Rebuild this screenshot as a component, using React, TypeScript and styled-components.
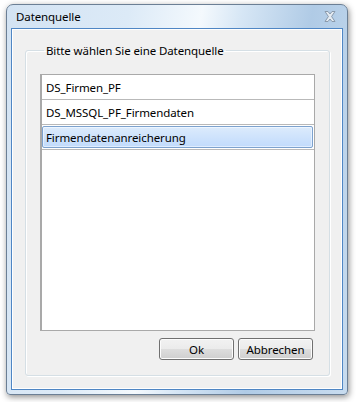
import React from "react";
import styled, { createGlobalStyle } from "styled-components";

const GlobalStyle = createGlobalStyle`
  html, body {
    margin: 0;
    padding: 0;
    background: #ffffff;
  }
  body {
    font-family: "Noto Sans", "Liberation Sans", sans-serif;
    font-size: 11.5px;
    color: #000;
  }
`;

const Page = styled.div`
  width: 358px;
  height: 402px;
  padding: 4px 0 0 6px;
  box-sizing: border-box;
`;

const Window = styled.div`
  width: 342px;
  height: 391px;
  box-sizing: border-box;
  display: flex;
  flex-direction: column;
  border: 1px solid #6b7f95;
  border-radius: 7px 7px 4px 4px;
  box-shadow: 1px 2px 6px rgba(0, 0, 0, 0.45);
  background: linear-gradient(
    100deg,
    #d3e3f3 0%,
    #dceaf7 30%,
    #f4f9fd 48%,
    #d6e6f5 58%,
    #b0cbe6 75%,
    #c8dcef 100%
  );
  padding: 0 4px 4px 4px;
`;

const TitleBar = styled.div`
  height: 23px;
  display: flex;
  align-items: center;
  justify-content: space-between;
  padding: 0 3px 0 5px;
`;

const Title = styled.span`
  font-size: 11.5px;
  color: #000;
  letter-spacing: -0.1px;
`;

const CloseIcon = styled.svg`
  width: 14px;
  height: 13px;
  margin-right: 3px;
`;

const Client = styled.div`
  flex: 1;
  border: 1px solid #4f86c4;
  box-shadow: inset 0 0 0 1px #ffffff;
  background: #f0f0f0;
  padding: 14px 12px 13px 13px;
  display: flex;
`;

const Group = styled.fieldset`
  flex: 1;
  margin: 0;
  padding: 16px 14px 15px 14px;
  border: 1px solid #d5dfe5;
  border-radius: 3px;
  box-shadow: inset 1px 1px 0 #ffffff, 1px 1px 0 #ffffff;
  display: flex;
  flex-direction: column;
  min-width: 0;
`;

const Legend = styled.legend`
  padding: 0 2px;
  margin-left: 4px;
  font-size: 11.5px;
  letter-spacing: -0.1px;
`;

const List = styled.div`
  flex: 1;
  background: #ffffff;
  border: 1px solid #a9a9a9;
  border-left: 2px solid #a9a9a9;
  display: flex;
  flex-direction: column;
`;

const Row = styled.div`
  height: 24px;
  border-bottom: 1px solid #b9b9b9;
  box-sizing: content-box;
  display: flex;
`;

const RowInner = styled.div<{ $selected?: boolean }>`
  flex: 1;
  display: flex;
  align-items: center;
  padding-left: ${(p) => (p.$selected ? "3px" : "4px")};
  letter-spacing: -0.1px;
  ${(p) =>
    p.$selected
      ? `
    margin: 1px 1px 1px 0;
    border: 1px solid #7da2ce;
    border-radius: 2px;
    background: linear-gradient(#dcebfc, #c1dbfc);
    box-shadow: inset 0 0 0 1px rgba(255,255,255,0.5);
  `
      : ""}
`;

const Buttons = styled.div`
  display: flex;
  justify-content: flex-end;
  gap: 4px;
  margin-top: 7px;
  padding-right: 2px;
`;

const Button = styled.button`
  width: 75px;
  height: 22px;
  box-sizing: border-box;
  border: 1px solid #707070;
  border-radius: 3px;
  font-family: "Noto Sans", "Liberation Sans", sans-serif;
  font-size: 11.5px;
  letter-spacing: -0.1px;
  color: #000;
  padding: 0;
  background: linear-gradient(#f2f2f2 0%, #ebebeb 50%, #dddddd 51%, #cfcfcf 100%);
  box-shadow: inset 0 0 0 1px #fcfcfc;
`;

const items = ["DS_Firmen_PF", "DS_MSSQL_PF_Firmendaten", "Firmendatenanreicherung"];
const selectedIndex = 2;

export default function App() {
  return (
    <>
      <GlobalStyle />
      <Page>
        <Window>
          <TitleBar>
            <Title>Datenquelle</Title>
            <CloseIcon viewBox="0 0 14 13">
              <path
                d="M2 1.5 L5 1.5 L7 4 L9 1.5 L12 1.5 L8.6 6.5 L12 11.5 L9 11.5 L7 9 L5 11.5 L2 11.5 L5.4 6.5 Z"
                fill="#e4ebf2"
                stroke="#8a9aab"
                strokeWidth="1"
                strokeLinejoin="round"
              />
            </CloseIcon>
          </TitleBar>
          <Client>
            <Group>
              <Legend>Bitte wählen Sie eine Datenquelle</Legend>
              <List>
                {items.map((item, i) => (
                  <Row key={item}>
                    <RowInner $selected={i === selectedIndex}>{item}</RowInner>
                  </Row>
                ))}
              </List>
              <Buttons>
                <Button>Ok</Button>
                <Button>Abbrechen</Button>
              </Buttons>
            </Group>
          </Client>
        </Window>
      </Page>
    </>
  );
}
